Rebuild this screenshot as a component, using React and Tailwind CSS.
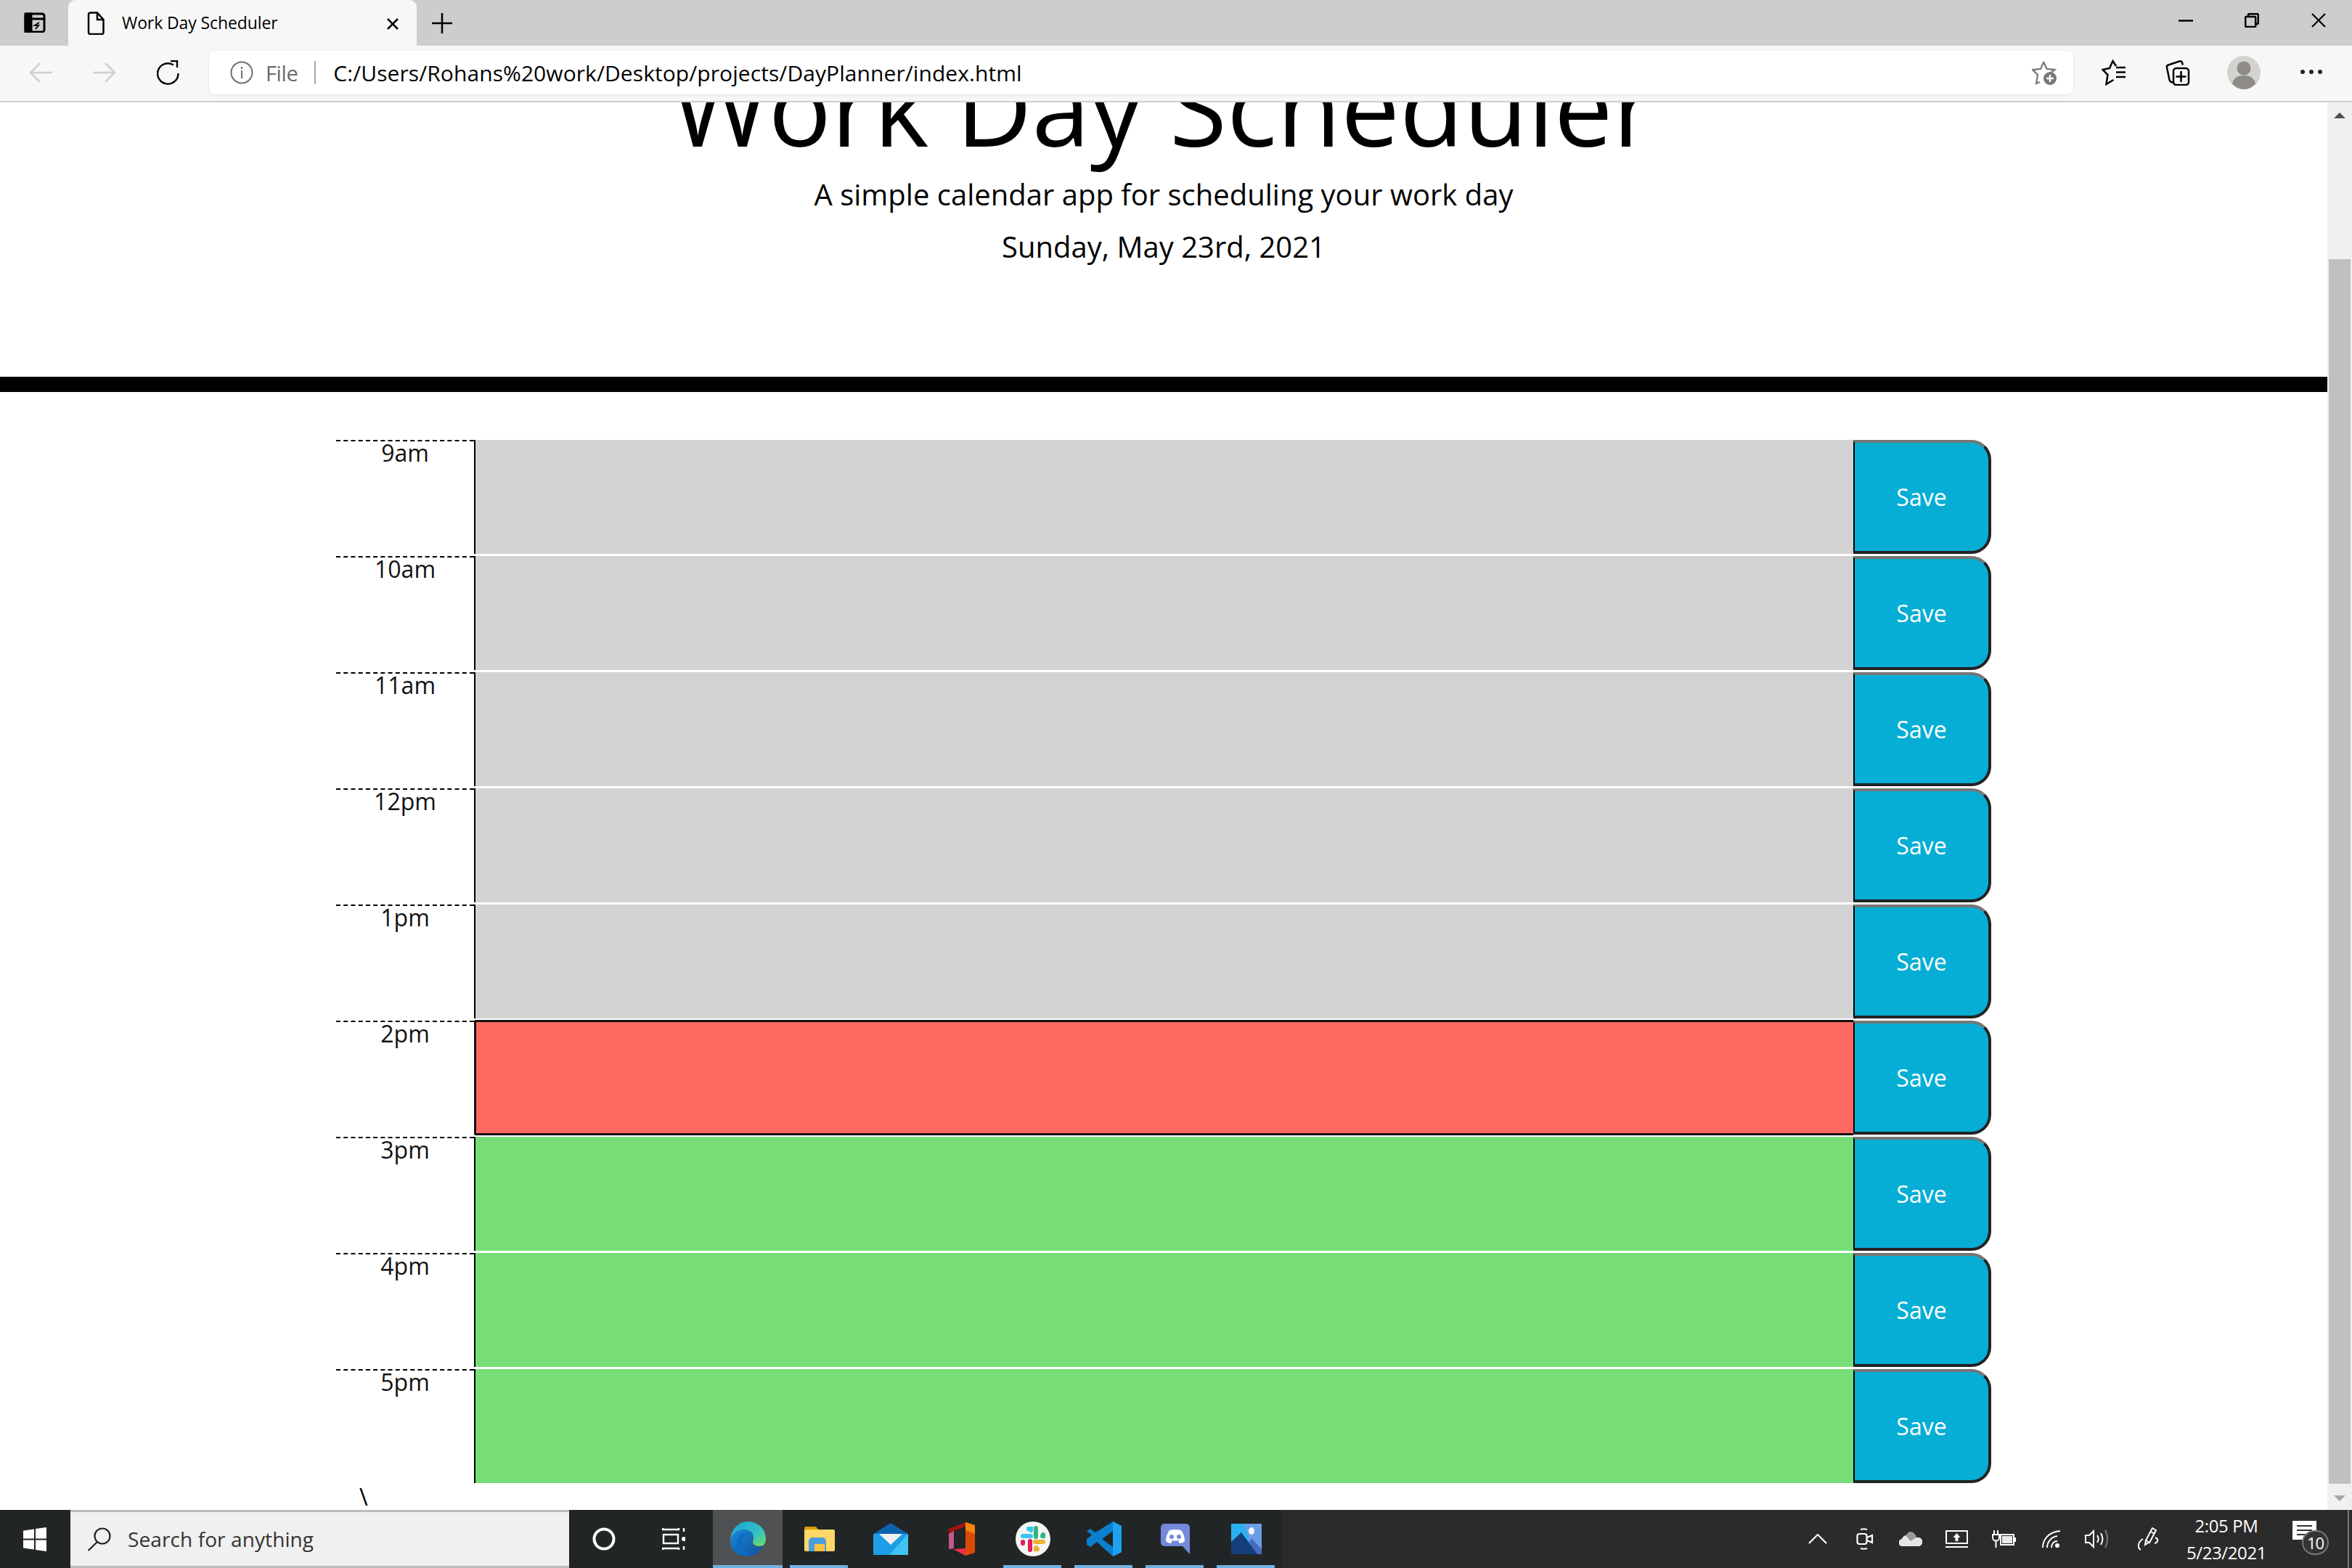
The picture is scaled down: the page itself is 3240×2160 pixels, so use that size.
import React from 'react';

const hours = [
  { label: '9am', tone: 'past' },
  { label: '10am', tone: 'past' },
  { label: '11am', tone: 'past' },
  { label: '12pm', tone: 'past' },
  { label: '1pm', tone: 'past' },
  { label: '2pm', tone: 'present' },
  { label: '3pm', tone: 'future' },
  { label: '4pm', tone: 'future' },
  { label: '5pm', tone: 'future' },
];

const toneClasses = {
  past: 'h-[157px] bg-[#d3d3d3] border-l-[2px] border-l-black',
  present: 'h-[159px] mt-[-1px] bg-[#ff6961] border-[3px] border-r-0 border-[#111] rounded-l-[3px]',
  future: 'h-[157px] bg-[#77dd77] border-l-[2px] border-l-black',
};

const Stroke = ({ w, h, children, className = '', color = '#000', width = 2.5 }) => (
  <svg
    width={w}
    height={h}
    viewBox={`0 0 ${w} ${h}`}
    fill="none"
    stroke={color}
    strokeWidth={width}
    className={`block shrink-0 ${className}`}
  >
    {children}
  </svg>
);

const TabStrip = () => (
  <div className="h-[63px] shrink-0 bg-[#cdcdcd] flex items-end">
    <div className="w-[94px] h-[63px] flex items-start pl-[33px] pt-[17px]">
      <Stroke w={30} h={28} width={3}>
        <rect x="2" y="2" width="26" height="25" rx="3" />
        <rect x="2" y="2" width="8" height="25" fill="#000" />
        <path d="M2 9h26" />
        <path d="M21 14l-6 4 5 0-4 5" strokeWidth="2" />
      </Stroke>
    </div>
    <div className="w-[480px] h-[63px] bg-[#f7f7f7] rounded-t-[10px] flex items-center pl-[26px] font-['Open_Sans',sans-serif] text-[23px] text-black">
      <Stroke w={24} h={32} width={2.5}>
        <path d="M2 4a2.5 2.5 0 0 1 2.5-2.5H14L22.5 11v17.5A2.5 2.5 0 0 1 20 31H4.5A2.5 2.5 0 0 1 2 28.5z" />
        <path d="M14 1.5V11h8.5" />
      </Stroke>
      <span className="ml-[24px] w-[364px] tracking-[-0.1px]">Work Day Scheduler</span>
      <Stroke w={18} h={18} width={2.5} className="mt-[2px]">
        <path d="M2 2l14 14M16 2L2 16" />
      </Stroke>
    </div>
    <div className="h-[63px] flex items-center pl-[21px]">
      <Stroke w={28} h={28} width={2.5}>
        <path d="M14 0v28M0 14h28" />
      </Stroke>
    </div>
    <div className="flex-1" />
    <div className="h-[63px] flex items-start pt-[18px] pr-[36px]">
      <Stroke w={20} h={20} className="mr-[71px]" width={2.5}>
        <path d="M0 10.5h20" />
      </Stroke>
      <Stroke w={20} h={20} className="mr-[72px]" width={2.5}>
        <rect x="1.2" y="5" width="14" height="14" rx="1" />
        <path d="M5 5V2.5A1.3 1.3 0 0 1 6.3 1.2h11A1.5 1.5 0 0 1 18.8 2.700v11A1.300 1.300 0 0 1 17.500 15H15.500" />
      </Stroke>
      <Stroke w={20} h={20} width={2.2}>
        <path d="M1 1l18 18M19 1L1 19" />
      </Stroke>
    </div>
  </div>
);

const Toolbar = () => (
  <div className="h-[78px] shrink-0 bg-[#f7f7f7] border-b-[2px] border-b-[#cfcfcf] flex items-center font-['Open_Sans',sans-serif]">
    <Stroke w={32} h={28} color="#cfcfcf" className="ml-[40px] mt-[-2px]">
      <path d="M32 14H2M15 1L2 14l13 13" />
    </Stroke>
    <Stroke w={32} h={28} color="#cfcfcf" className="ml-[56px] mt-[-2px]">
      <path d="M0 14h30M17 1l13 13-13 13" />
    </Stroke>
    <Stroke w={32} h={34} className="ml-[56px] mt-[-2px]" width={2.4}>
      <path d="M23 6.500A14.200 14.200 0 1 0 29.500 18" />
      <path d="M15 1l9 0 0 9" transform="translate(4 0)" />
    </Stroke>
    <div className="ml-[40px] w-[2568px] h-[60px] mt-[-2px] bg-white rounded-[8px] shadow-[0_1px_4px_rgba(0,0,0,0.08)] flex items-center pl-[29px]">
      <Stroke w={32} h={32} color="#6e6e6e" width={2}>
        <circle cx="16" cy="16" r="14.500" />
        <path d="M16 13v11M16 8v3" />
      </Stroke>
      <span className="ml-[17px] text-[29px] text-[#6a6a6a] tracking-[-0.4px] mt-[1px]">File</span>
      <span className="ml-[23px] w-[2px] h-[32px] bg-[#a8a8a8]" />
      <span className="ml-[24px] text-[30px] tracking-[0.07px] text-black whitespace-nowrap mt-[1px]">
        C:/Users/Rohans%20work/Desktop/projects/DayPlanner/index.html
      </span>
      <div className="flex-1" />
      <svg width="34" height="34" viewBox="0 0 34 34" className="block mr-[23px] shrink-0">
        <path d="M16 2l4.500 10 11 1-5 4M11 30l-5 2 2-12-7-7 11-1 4.500-10" fill="none" stroke="#7a7a7a" strokeWidth="2.300" />
        <circle cx="25" cy="25" r="9" fill="#767676" />
        <path d="M25 20v10M20 25h10" stroke="#fff" strokeWidth="2.500" />
      </svg>
    </div>
    <Stroke w={34} h={36} className="ml-[39px] mt-[-2px]" width={2.500}>
      <path d="M20 9L15.500 2 11 12 1.500 14l7 7-2 13 10-6" />
      <path d="M20 11h13M20 17.500h13M20 24h13" />
    </Stroke>
    <Stroke w={34} h={36} className="ml-[54px] mt-[-2px]" width={2.500}>
      <path d="M10 32l-2-1c-1.500-.5-2-1-2.500-3L2 11c-.5-2 .5-3 2-3.500l15-5c2-.5 3.500 0 4 2l1 3" />
      <rect x="11" y="12" width="21" height="23" rx="4" />
      <path d="M21.500 16v15M14.500 23.500h14" />
    </Stroke>
    <svg width="46" height="46" viewBox="0 0 46 46" className="block ml-[51px] mt-[-2px] shrink-0">
      <circle cx="23" cy="23" r="23" fill="#d2d2ce" />
      <circle cx="23" cy="17" r="9.500" fill="#8e8a85" />
      <path d="M7 38c2-8 8-11 16-11s14 3 16 11c-4 5-10 8-16 8s-12-3-16-8z" fill="#8e8a85" />
    </svg>
    <div className="ml-[55px] mt-[-4px] flex gap-[6px]">
      <span className="w-[6px] h-[6px] rounded-full bg-[#222]" />
      <span className="w-[6px] h-[6px] rounded-full bg-[#222]" />
      <span className="w-[6px] h-[6px] rounded-full bg-[#222]" />
    </div>
  </div>
);

const HourRow = ({ label, tone }) => (
  <div className="grid grid-cols-[190px_1900px_190px] h-[160px]">
    <div className="border-t-[2px] border-dashed border-black text-center text-[32px] leading-[32px] text-[#111]">
      {label}
    </div>
    <textarea readOnly className={`resize-none outline-none block ${toneClasses[tone]}`} />
    <button className="h-[157px] bg-[#06aed5] text-white text-[32px] rounded-r-[27px] border-t-[4px] border-r-[4px] border-b-[4px] border-l-[2px] border-t-[#767676] border-r-[#222] border-b-[#222] border-l-black">
      Save
    </button>
  </div>
);

const Page = () => (
  <div className="flex-1 min-w-0 overflow-hidden bg-white font-['Open_Sans',sans-serif] text-black">
    <header className="h-[378px] overflow-hidden flex flex-col items-center">
      <h1 className="mt-[-90px] h-[190px] text-[144px] leading-[190px] font-normal whitespace-nowrap">Work Day Scheduler</h1>
      <p className="mt-[-1px] text-[40px] leading-[56px]">A simple calendar app for scheduling your work day</p>
      <p className="mt-[16px] text-[40px] leading-[56px]">Sunday, May 23rd, 2021</p>
    </header>
    <div className="h-[21px] bg-black" />
    <main className="mt-[66px] ml-[463px] w-[2280px]">
      {hours.map((hour) => (
        <HourRow key={hour.label} {...hour} />
      ))}
      <p className="ml-[32px] text-[32px] leading-[32px]">\</p>
    </main>
  </div>
);

const Scrollbar = () => (
  <div className="w-[34px] shrink-0 bg-[#f0f0f0] flex flex-col items-center">
    <div className="mt-[14px] w-0 h-0 border-x-[8px] border-x-transparent border-b-[8px] border-b-[#505050]" />
    <div className="mt-[194px] w-[30px] h-[1687px] bg-[#c0c0c0]" />
    <div className="mt-[16px] w-0 h-0 border-x-[8px] border-x-transparent border-t-[8px] border-t-[#a6a6a6]" />
  </div>
);

const EdgeIcon = () => (
  <svg width="49" height="48" viewBox="0 0 49 48">
    <defs>
      <linearGradient id="edgeTop" x1="0" y1="0" x2="1" y2="1">
        <stop offset="0" stopColor="#1c9fd8" />
        <stop offset="0.6" stopColor="#35c1c4" />
        <stop offset="1" stopColor="#6ede62" />
      </linearGradient>
      <linearGradient id="edgeLow" x1="0" y1="0" x2="1" y2="1">
        <stop offset="0" stopColor="#1a8ad6" />
        <stop offset="1" stopColor="#0c4f9e" />
      </linearGradient>
    </defs>
    <path d="M24 0c14 0 25 10 25 24 0 7-4 10-9 10-6 0-9-3-9-6 0-2 1-3 1-6 0-5-5-9-11-9C11 13 3 20 0 28 0 12 10 0 24 0z" fill="url(#edgeTop)" />
    <path d="M0 28c0-9 8-17 19-17 7 0 13 4 13 10 0 3-2 4-2 7 0 5 4 7 9 7 3 0 5-1 6-2-3 9-12 15-22 15C10 48 0 40 0 28z" fill="url(#edgeLow)" />
    <path d="M24 17c-6 2-9 8-8 15s6 13 12 15c-9 2-19-3-20-15-1-8 7-17 16-15z" fill="#0e6cc0" />
  </svg>
);

const ExplorerIcon = () => (
  <svg width="42" height="34" viewBox="0 0 42 34">
    <path d="M0 2a2 2 0 0 1 2-2h14l4 5v4H0z" fill="#d99b00" />
    <rect y="4" width="42" height="30" rx="2" fill="#ffd766" />
    <path d="M6 34V20a5 5 0 0 1 5-5h14a5 5 0 0 1 5 5v14h-6V24H14v10z" fill="#4a9de0" />
    <rect x="14" y="24" width="14" height="10" fill="#fcc43d" />
  </svg>
);

const MailIcon = () => (
  <svg width="48" height="44" viewBox="0 0 48 44">
    <path d="M24 0l24 15H0z" fill="#0b63b0" />
    <rect y="15" width="48" height="29" fill="#1c9fe6" />
    <path d="M48 15v29H22z" fill="#3fc4f2" />
    <path d="M8 15h32L24 30z" fill="#f1f1f1" />
  </svg>
);

const OfficeIcon = () => (
  <svg width="36" height="46" viewBox="0 0 36 46">
    <path d="M23 0l13 4v38l-13 4z" fill="#dc4a05" />
    <path d="M23 0l13 4v12l-13-5z" fill="#f58410" />
    <path d="M0 9l23-9v6L7 12v24L0 37z" fill="#a51212" />
    <path d="M0 16l7-4v24l-7 1z" fill="#c2578a" />
    <path d="M6 37l17-1v10z" fill="#ef2e48" />
    <path d="M7 12l16-6v30H7z" fill="#222526" />
  </svg>
);

const SlackIcon = () => (
  <svg width="48" height="48" viewBox="0 0 48 48">
    <circle cx="24" cy="24" r="24" fill="#f4f4f4" />
    <g strokeLinecap="round" strokeWidth="6" fill="none">
      <path d="M10 20h11M18 10h3v2" stroke="#36c5f0" />
      <path d="M28 9v12M37 20h1v-2" stroke="#2eb67d" />
      <path d="M27 28h11M30 38h-2v-2" stroke="#ecb22e" />
      <path d="M20 27v12M10 28h-0v2" stroke="#e01e5a" />
    </g>
  </svg>
);

const CodeIcon = () => (
  <svg width="48" height="48" viewBox="0 0 48 48">
    <path d="M36 0l12 6v36l-12 6-22-20-9 7-5-3v-8l9-7z" fill="#0a7fce" />
    <path d="M14 24L0 13l5-3 9 7z" fill="#0a7fce" />
    <path d="M36 13L21 24l15 11z" fill="#222526" />
    <path d="M36 0l12 6v36l-12 6z" fill="#1ea2ef" />
  </svg>
);

const DiscordIcon = () => (
  <svg width="40" height="42" viewBox="0 0 40 42">
    <path d="M5 0h30a5 5 0 0 1 5 5v37l-10-11H5a5 5 0 0 1-5-5V5a5 5 0 0 1 5-5z" fill="#7389da" />
    <path d="M12 9c3-1 5-1 8-1s5 0 8 1c3 4 5 9 5 15-2 2-5 3-7 3l-2-3 3-2c-5 2-9 2-14 0l3 2-2 3c-2 0-5-1-7-3 0-6 2-11 5-15z" fill="#fff" />
    <circle cx="15" cy="18" r="3" fill="#7389da" />
    <circle cx="25" cy="18" r="3" fill="#7389da" />
  </svg>
);

const PhotosIcon = () => (
  <svg width="42" height="42" viewBox="0 0 42 42">
    <rect width="42" height="42" fill="#2ab0ee" />
    <path d="M18 0h24v42H30z" fill="#6c9ee6" />
    <ellipse cx="28" cy="10" rx="4" ry="5" fill="#f1f5fa" />
    <path d="M28 20l14 15v7H14z" fill="#476ac0" />
    <path d="M0 25l14-13 22 30H0z" fill="#143f7c" />
  </svg>
);

const apps = [
  { id: 'edge', Icon: EdgeIcon, active: true, running: true },
  { id: 'explorer', Icon: ExplorerIcon, running: true },
  { id: 'mail', Icon: MailIcon },
  { id: 'office', Icon: OfficeIcon },
  { id: 'slack', Icon: SlackIcon, running: true },
  { id: 'code', Icon: CodeIcon, running: true },
  { id: 'discord', Icon: DiscordIcon, running: true },
  { id: 'photos', Icon: PhotosIcon, running: true },
];

const Taskbar = () => (
  <div className="h-[80px] shrink-0 flex bg-[#222526] font-['Open_Sans',sans-serif]">
    <div className="w-[97px] flex items-center pl-[32px]">
      <svg width="32" height="33" viewBox="0 0 32 33">
        <path d="M0 4.500L15 2.500V15.500H0zM17 2L32 0V15.500H17zM0 17.500H15V30.500L0 28.500zM17 17.500H32V33L17 31z" fill="#fff" />
      </svg>
    </div>
    <div className="w-[687px] bg-[#f0f0f0] border-y-[3px] border-y-[#bdbdbd] flex items-center pl-[23px]">
      <Stroke w={34} h={34} color="#222" width={2.200}>
        <circle cx="21" cy="13" r="10.500" />
        <path d="M14 21L1.500 33" />
      </Stroke>
      <span className="ml-[22px] text-[28px] text-[#333] tracking-[0.1px]">Search for anything</span>
    </div>
    <div className="w-[198px] flex items-center pl-[32px]">
      <Stroke w={32} h={32} color="#fff" width={4}>
        <ellipse cx="16" cy="16" rx="13.500" ry="13.500" />
      </Stroke>
      <Stroke w={32} h={32} color="#fff" width={2.400} className="ml-[64px]">
        <path d="M1 1v2h22V1M1 31v-2h22v2" />
        <rect x="2" y="10" width="20" height="12" />
        <path d="M30 1v5M30 26v5" />
        <circle cx="30" cy="16" r="3" fill="#fff" stroke="none" />
      </Stroke>
    </div>
    <div className="flex">
      {apps.map(({ id, Icon, active, running }) => (
        <div key={id} className={`relative flex items-center justify-center ${active ? 'w-[96px] mr-[2px] bg-[#4f5152]' : 'w-[98px]'}`}>
          <Icon />
          {running && (
            <span className={`absolute bottom-0 h-[4px] bg-[#6fb1e3] ${active ? 'left-0 right-0' : 'left-[8px] right-[10px]'}`} />
          )}
        </div>
      ))}
    </div>
    <div className="flex-1 bg-[#2b2b2b] flex items-center pl-[725px]">
      <Stroke w={26} h={14} color="#fff" width={2.200}>
        <path d="M1 13L13 1l12 12" />
      </Stroke>
      <Stroke w={24} h={30} color="#fff" width={2.200} className="ml-[40px]">
        <path d="M6 2c3-1 6-1 9 0M6 28c3 1 6 1 9 0" />
        <rect x="1.500" y="8" width="13" height="14" rx="3" />
        <path d="M15 13l7-3v10l-7-3" />
      </Stroke>
      <svg width="32" height="20" viewBox="0 0 32 20" className="ml-[35px] block shrink-0">
        <path d="M5 20a5 5 0 0 1-1-10 7 7 0 0 1 6-5 9 9 0 0 1 14 3 6 6 0 0 1 4 12z" fill="#e6e6e6" />
        <path d="M14 0a9 9 0 0 1 10 8l-8 5-7-8z" fill="#9a9a9a" />
      </svg>
      <svg width="31" height="24" viewBox="0 0 31 24" className="ml-[32px] block shrink-0">
        <rect x="1" y="1" width="29" height="17" fill="none" stroke="#fff" strokeWidth="2" />
        <path d="M0 23h31" stroke="#fff" strokeWidth="2" />
        <path d="M15.500 4l5 6h-3v5h-4v-5h-3z" fill="#fff" />
      </svg>
      <svg width="33" height="24" viewBox="0 0 33 24" className="ml-[33px] block shrink-0">
        <path d="M3 0v6M8 0v6M1 6h9v4a4.500 4.500 0 0 1-9 0zM5.500 14v10" stroke="#fff" strokeWidth="2" fill="none" />
        <rect x="12" y="6" width="18" height="14" fill="none" stroke="#fff" strokeWidth="2" />
        <rect x="14" y="8" width="14" height="10" fill="#fff" opacity="0.9" />
        <rect x="31" y="10" width="2" height="6" fill="#fff" />
      </svg>
      <svg width="26" height="24" viewBox="0 0 26 24" className="ml-[36px] block shrink-0" fill="none" stroke="#fff" strokeWidth="2">
        <path d="M1 24C1 12 10 2 25 1" />
        <path d="M7 24c0-8 6-15 14-16" />
        <path d="M13 24c0-5 3-9 8-9" />
        <circle cx="21" cy="21" r="3" fill="#fff" stroke="none" />
      </svg>
      <svg width="33" height="26" viewBox="0 0 33 26" className="ml-[33px] block shrink-0" fill="none" stroke="#fff" strokeWidth="2">
        <path d="M1 8h5l6-6v22l-6-6H1z" />
        <path d="M17 8c2 3 2 7 0 10M22 5c3 5 3 11 0 16" />
        <path d="M28 1c4 7 4 17 0 24" stroke="#777" />
      </svg>
      <svg width="31" height="32" viewBox="0 0 31 32" className="ml-[39px] block shrink-0" fill="none" stroke="#fff" strokeWidth="2">
        <path d="M21 1l5 3-9 17-5-3z" />
        <path d="M12 18l-1 6 5-3M19 6l5 3" />
        <path d="M25 14c5 2 4 7-1 8M8 16C1 20 0 28 5 31" />
      </svg>
      <div className="ml-[40px] w-[104px] flex flex-col items-center text-white text-[24px] leading-[37px] tracking-[-0.4px] whitespace-nowrap">
        <span>2:05 PM</span>
        <span>5/23/2021</span>
      </div>
      <div className="ml-[39px] relative w-[33px] h-[26px] mt-[-24px] bg-white flex flex-col justify-center gap-[4px] px-[6px]">
        <span className="h-[2px] bg-[#333]" />
        <span className="h-[2px] bg-[#333]" />
        <span className="h-[2px] bg-[#333] w-[14px]" />
        <span className="absolute left-[13px] top-[13px] w-[37px] h-[34px] rounded-full bg-[#333] border-[2px] border-[#777] text-white text-[22px] leading-[30px] text-center tracking-[-1px]">
          10
        </span>
      </div>
      <div className="flex-1" />
      <span className="w-[2px] h-full bg-[#777] mr-[4px]" />
    </div>
  </div>
);

const App = () => {
  return (
    <div className="w-[3240px] h-[2160px] flex flex-col overflow-hidden">
      <TabStrip />
      <Toolbar />
      <div className="flex-1 min-h-0 flex overflow-hidden">
        <Page />
        <Scrollbar />
      </div>
      <Taskbar />
    </div>
  );
};

export default App;
